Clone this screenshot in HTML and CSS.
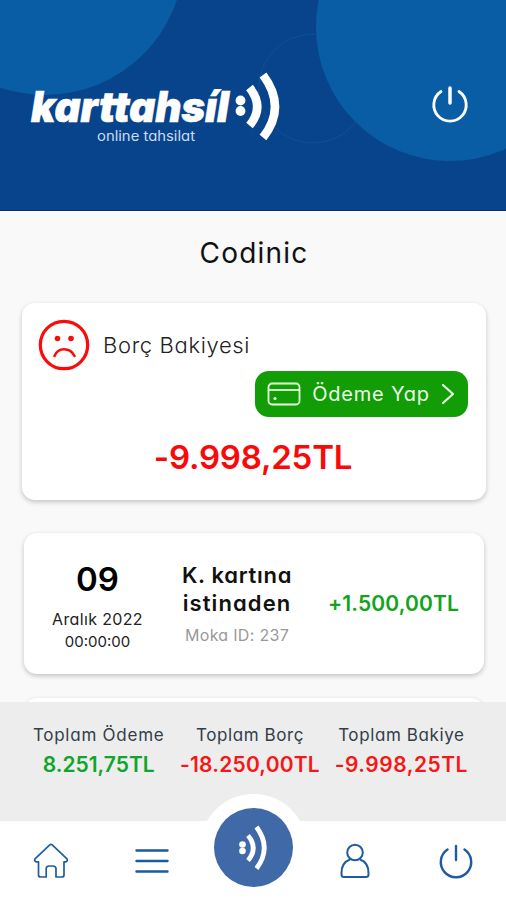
FILE: index.html
```html
<!DOCTYPE html>
<html lang="tr">
<head>
<meta charset="utf-8">
<meta name="viewport" content="width=device-width, initial-scale=1">
<title>karttahsil</title>
<link rel="stylesheet" href="styles.css">
</head>
<body>
<div class="app">
  <header class="header">
    <svg class="header-art" viewBox="0 0 506 211" aria-hidden="true">
      <circle cx="45" cy="-44" r="139" fill="#095da5"/>
      <circle cx="313" cy="88.500" r="54.500" fill="none" stroke="#0d5299"/>
      <circle cx="450" cy="27" r="134" fill="#095da5"/>
    </svg>
    <svg class="logo" width="256" height="80" viewBox="0 0 256 80">
      <text class="logo-name" x="4" y="54.500" textLength="198" lengthAdjust="spacingAndGlyphs">karttahsíl</text>
      <text class="logo-sub" x="70" y="73.500" textLength="98" lengthAdjust="spacingAndGlyphs">online tahsilat</text>
      <g fill="#fff"><circle cx="213.500" cy="33.500" r="4.900"/><circle cx="213.500" cy="44" r="4.900"/></g>
      <g fill="none" stroke="#fff" stroke-width="8.500">
        <path d="M222.500 20.500Q238 40 222.500 58.500"/>
        <path d="M236 8Q260 40 236 70.500"/>
      </g>
    </svg>
    <svg class="header-power" width="38" height="38" viewBox="0 0 38 38" fill="none" stroke="#fff" stroke-width="2.800" stroke-linecap="round">
      <path d="M10 6.500A16.200 16.200 0 1 0 28 6.500"/><path d="M19 3V18" stroke-width="3.500"/>
    </svg>
  </header>

  <main class="content">
    <h1 class="title">Codinic</h1>
    <section class="card balance">
      <div class="balance-head">
        <svg width="52" height="52" viewBox="0 0 52 52" fill="none" stroke="#fb0b0b" stroke-width="3.200" stroke-linecap="round">
          <circle cx="26" cy="26" r="23.700"/>
          <path d="M16.500 37C20 28 32 28 36.500 37" stroke-width="2.600"/>
          <g fill="#fb0b0b" stroke="none"><circle cx="19.500" cy="19.500" r="2.800"/><circle cx="33" cy="19.500" r="2.800"/></g>
        </svg>
        <span class="balance-label">Borç Bakiyesi</span>
      </div>
      <button class="pay">
        <svg width="34" height="24" viewBox="0 0 34 24" fill="none" stroke="#e4ffdf" stroke-width="1.800">
          <rect x="1.500" y="1.500" width="31" height="21" rx="3.500"/><path d="M1.500 8H32.500"/>
          <circle cx="8" cy="16.500" r="1.600" fill="#e4ffdf" stroke="none"/>
        </svg>
        <span class="pay-label">Ödeme Yap</span>
        <svg width="14" height="22" viewBox="0 0 14 22" fill="none" stroke="#e4ffdf" stroke-width="2.200" stroke-linecap="round" stroke-linejoin="round"><path d="M2 2L12 11L2 20"/></svg>
      </button>
      <div class="balance-amount">-9.998,25TL</div>
    </section>

    <section class="card entry">
      <div class="date">
        <div class="day">09</div>
        <div class="month">Aralık 2022</div>
        <div class="time">00:00:00</div>
      </div>
      <div class="detail">
        <div class="detail-title"><span class="line-a">K. kartına</span><br><span class="line-b">istinaden</span></div>
        <div class="detail-id">Moka ID: 237</div>
      </div>
      <div class="entry-amount">+1.500,00TL</div>
    </section>
    <section class="card entry"></section>
  </main>

  <section class="totals">
    <div class="total paid"><div class="total-label">Toplam Ödeme</div><div class="total-value">8.251,75TL</div></div>
    <div class="total debt"><div class="total-label">Toplam Borç</div><div class="total-value">-18.250,00TL</div></div>
    <div class="total rest"><div class="total-label">Toplam Bakiye</div><div class="total-value">-9.998,25TL</div></div>
  </section>

  <nav class="nav">
    <a class="nav-item start"><svg width="36" height="36" viewBox="0 0 36 36" fill="none" stroke="#1f5c9f" stroke-width="1.700" stroke-linejoin="round">
      <path d="M16.800 1.800Q18 .8 19.200 1.800L34 15.800Q35 18.500 32.500 18.800H31V32Q31 34 29 34H23V25.500Q22.500 23 20 23H16Q13.500 23 13.200 25.500V34H7.500Q5.500 34 5.500 32V18.800H3.500Q1 18.500 2 15.800Z"/></svg></a>
    <a class="nav-item start"><svg width="36" height="36" viewBox="0 0 36 36" fill="none" stroke="#1c5a9f" stroke-width="2.400" stroke-linecap="round"><path d="M2.500 7.500H33.500M2.500 18H33.500M2.500 28.500H33.500"/></svg></a>
    <a class="nav-item home-slot"><span class="fab"><svg width="79" height="79" viewBox="0 0 79 79">
      <g fill="#fff"><circle cx="28.500" cy="36.500" r="3.300"/><circle cx="28.500" cy="43" r="3.300"/></g>
      <g fill="none" stroke="#fff" stroke-width="4.800"><path d="M34 27.500Q44.500 40 34 52.500"/><path d="M42.500 19Q58 40 42.500 60.500"/></g></svg></span></a>
    <a class="nav-item"><svg width="36" height="36" viewBox="0 0 36 36" fill="none" stroke="#1f5c9f" stroke-width="2" stroke-linejoin="round"><circle cx="18" cy="9.500" r="7.800"/><path d="M13 16.500C7.500 18.500 4.500 23 4.500 30V31.500Q4.500 34 7 34H29Q31.500 34 31.500 31.500V30C31.500 23 28.500 18.500 23 16.500"/></svg></a>
    <a class="nav-item"><svg width="36" height="36" viewBox="0 0 36 36" fill="none" stroke="#1f5c9f" stroke-width="2.400" stroke-linecap="round"><path d="M9.500 6.500A15.200 15.200 0 1 0 26.500 6.500"/><path d="M18 3V17"/></svg></a>
  </nav>
</div>
</body>
</html>
```
FILE: styles.css
```css
* { box-sizing: border-box; }
body { margin: 0; font-family: Inter, "Open Sans", sans-serif; font-feature-settings: "cv11"; color: #111; background: #f9f9f9; }
.app { width: 506px; height: 900px; display: flex; flex-direction: column; overflow: hidden; }

.header { position: relative; flex: none; height: 211px; background: #08448b; border-bottom: 1px solid #032d83; display: flex; align-items: flex-start; justify-content: space-between; padding: 67px 37px 0 27px; }
.header-art { position: absolute; inset: 0; width: 506px; height: 211px; }
.logo, .header-power { position: relative; }
.header-power { margin-top: 18px; }
.logo-name { font: italic 900 42px Inter, sans-serif; font-feature-settings: "cv11"; fill: #fff; stroke: #fff; stroke-width: .6px; }
.logo-sub { font: 400 14px Inter, sans-serif; font-feature-settings: "cv11"; fill: #cbdcf2; }

.content { flex: none; height: 491px; overflow: hidden; padding: 0 20px 0 22px; display: flex; flex-direction: column; }
.title { margin: 24px 0 0; height: 36px; line-height: 36px; text-align: center; font-size: 28px; font-weight: 400; letter-spacing: 1.200px; }
.card { background: #fff; border-radius: 13px; box-shadow: 0 2px 5px rgba(0,0,0,.22); flex: none; }

.balance { margin-top: 32px; height: 197px; padding: 16px 18px 0 16px; display: flex; flex-direction: column; }
.balance-head { display: flex; align-items: center; gap: 13px; height: 52px; }
.balance-label { font-size: 22px; font-weight: 300; letter-spacing: .65px; color: #222; }
.pay { align-self: flex-end; width: 213px; height: 46px; border: 0; border-radius: 14px; background: #129c05; color: #eaffe6; display: flex; align-items: center; justify-content: space-between; padding: 0 13px 0 12px; font-family: inherit; font-feature-settings: inherit; }
.pay-label { font-size: 20px; letter-spacing: .8px; }
.balance-amount { margin-top: 19px; text-align: center; line-height: 42px; font-size: 33px; font-weight: 600; letter-spacing: -.2px; color: #fb0909; }

.entry { margin: 33px 2px 0; height: 141px; display: flex; padding-top: 25px; }
.entry + .entry { margin-top: 24px; padding: 0; }
.date { width: 147px; text-align: center; color: #222; }
.day { font-size: 33px; font-weight: 600; line-height: 42px; color: #000; }
.month { font-size: 16px; line-height: 24px; margin-top: 7px; letter-spacing: .35px; }
.time { font-size: 15px; line-height: 22px; }
.detail { width: 132px; text-align: center; padding-top: 3px; }
.detail-title { font-size: 22px; line-height: 28px; font-weight: 600; white-space: nowrap; }
.line-a { letter-spacing: .7px; }
.line-b { letter-spacing: 1.100px; }
.detail-id { font-size: 16px; line-height: 24px; margin-top: 6px; letter-spacing: .3px; color: #999; }
.entry-amount { margin-left: auto; margin-right: 25px; margin-top: 32px; line-height: 28px; font-size: 21px; font-weight: 600; letter-spacing: .15px; color: #10a51b; }

.totals { flex: none; height: 119px; background: #ededed; padding: 20px 29px 0 23px; display: grid; grid-template-columns: repeat(3, 1fr); text-align: center; }
.total { display: flex; flex-direction: column; align-items: center; white-space: nowrap; }
.total-label { font-size: 17px; line-height: 26px; letter-spacing: .6px; color: #333d48; }
.total-value { font-size: 21px; line-height: 34px; font-weight: 600; letter-spacing: .2px; color: #f51818; }
.paid .total-label { letter-spacing: .75px; }
.paid .total-value { color: #10a52b; letter-spacing: 0; }
.rest .total-value { letter-spacing: .5px; }

.nav { flex: none; height: 79px; background: #fff; display: grid; grid-template-columns: repeat(5, 1fr); padding-left: 1px; }
.nav-item { display: flex; justify-content: center; padding-top: 22px; }
.start { padding-right: 2px; }
.home-slot { padding: 0; position: relative; }
.fab { position: absolute; top: -27px; left: -3px; width: 107px; height: 107px; border-radius: 50%; background: #fff; display: grid; place-items: center; }
.fab svg { border-radius: 50%; background: #3f6aa7; }
```
